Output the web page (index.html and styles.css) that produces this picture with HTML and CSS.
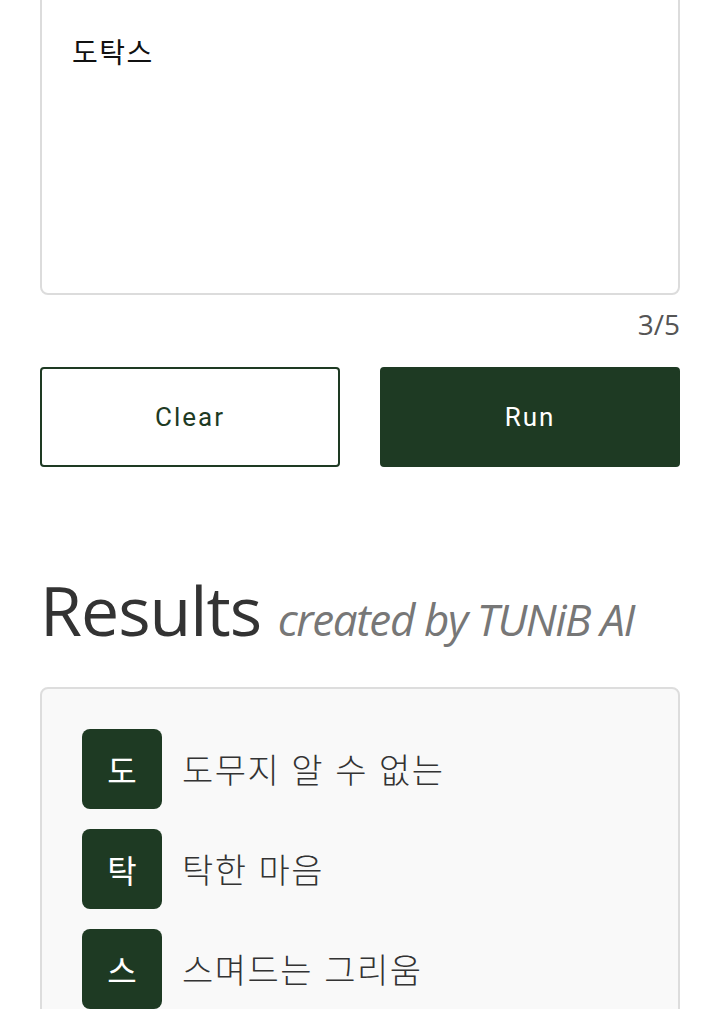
FILE: index.html
```html
<!DOCTYPE html>
<html lang="ko">
<head>
<meta charset="utf-8">
<title>TUNiB 삼행시</title>
<link rel="stylesheet" href="styles.css">
</head>
<body>
<main class="page">
  <section class="input-section">
    <textarea class="prompt" readonly>도탁스</textarea>
    <div class="counter">3/5</div>
    <div class="actions">
      <button class="btn btn-outline" type="button">Clear</button>
      <button class="btn btn-solid" type="button">Run</button>
    </div>
  </section>
  <section class="results-section">
    <h2 class="results-title">Results <span class="results-sub">created by TUNiB AI</span></h2>
    <div class="results-box">
      <ul class="result-list">
        <li class="result-row"><span class="badge">도</span><span class="line">도무지 알 수 없는</span></li>
        <li class="result-row"><span class="badge">탁</span><span class="line">탁한 마음</span></li>
        <li class="result-row"><span class="badge">스</span><span class="line">스며드는 그리움</span></li>
      </ul>
    </div>
  </section>
</main>
</body>
</html>
```
FILE: styles.css
```css
html, body {
  margin: 0;
  padding: 0;
  background: #ffffff;
  overflow: hidden;
}
body {
  font-family: "Open Sans", "Noto Sans CJK KR", sans-serif;
  color: #333;
}
.page {
  padding: 0 40px;
}
.input-section {
  display: flex;
  flex-direction: column;
}
.prompt {
  display: block;
  box-sizing: border-box;
  width: 100%;
  height: 311px;
  margin: -16px 0 0;
  padding: 44px 30px;
  border: 2px solid #dcdcdc;
  border-radius: 8px;
  background: #fff;
  font-family: "Noto Sans CJK KR", sans-serif;
  font-size: 28px;
  letter-spacing: 1.5px;
  line-height: 1.5;
  color: #111;
  resize: none;
  outline: none;
}
.counter {
  margin-top: 8px;
  height: 42px;
  text-align: right;
  font-family: "Open Sans", sans-serif;
  font-size: 28px;
  line-height: 42px;
  color: #555;
}
.actions {
  margin-top: 22px;
  display: grid;
  grid-template-columns: 1fr 1fr;
  gap: 40px;
}
.btn {
  box-sizing: border-box;
  height: 100px;
  border-radius: 4px;
  font-family: "Roboto", sans-serif;
  font-size: 26px;
  letter-spacing: 2px;
  cursor: pointer;
}
.btn-outline {
  background: #fff;
  border: 2px solid #1e3a23;
  color: #1e3a23;
}
.btn-solid {
  background: #1e3a23;
  border: 2px solid #1e3a23;
  color: #fff;
}
.results-section {
  margin-top: 102px;
}
.results-title {
  margin: 0;
  font-family: "Open Sans", sans-serif;
  font-weight: 400;
  font-size: 68px;
  line-height: 1.2;
  letter-spacing: -1px;
  color: #333;
}
.results-sub {
  font-style: italic;
  font-size: 44px;
  letter-spacing: -1.4px;
  color: #777;
}
.results-box {
  margin-top: 36px;
  border: 2px solid #dddddd;
  border-radius: 8px;
  background: #f9f9f9;
  padding: 40px;
}
.result-list {
  list-style: none;
  margin: 0;
  padding: 0;
  display: flex;
  flex-direction: column;
  gap: 20px;
}
.result-row {
  display: flex;
  align-items: center;
  gap: 20px;
}
.badge {
  flex: none;
  width: 80px;
  height: 80px;
  border-radius: 8px;
  background: #1e3a23;
  color: #fff;
  display: flex;
  align-items: center;
  justify-content: center;
  font-family: "Noto Sans CJK KR", sans-serif;
  font-size: 32px;
}
.line {
  font-family: "Noto Sans CJK KR", sans-serif;
  font-weight: 300;
  font-size: 34px;
  letter-spacing: 1.5px;
  color: #333;
}
```
